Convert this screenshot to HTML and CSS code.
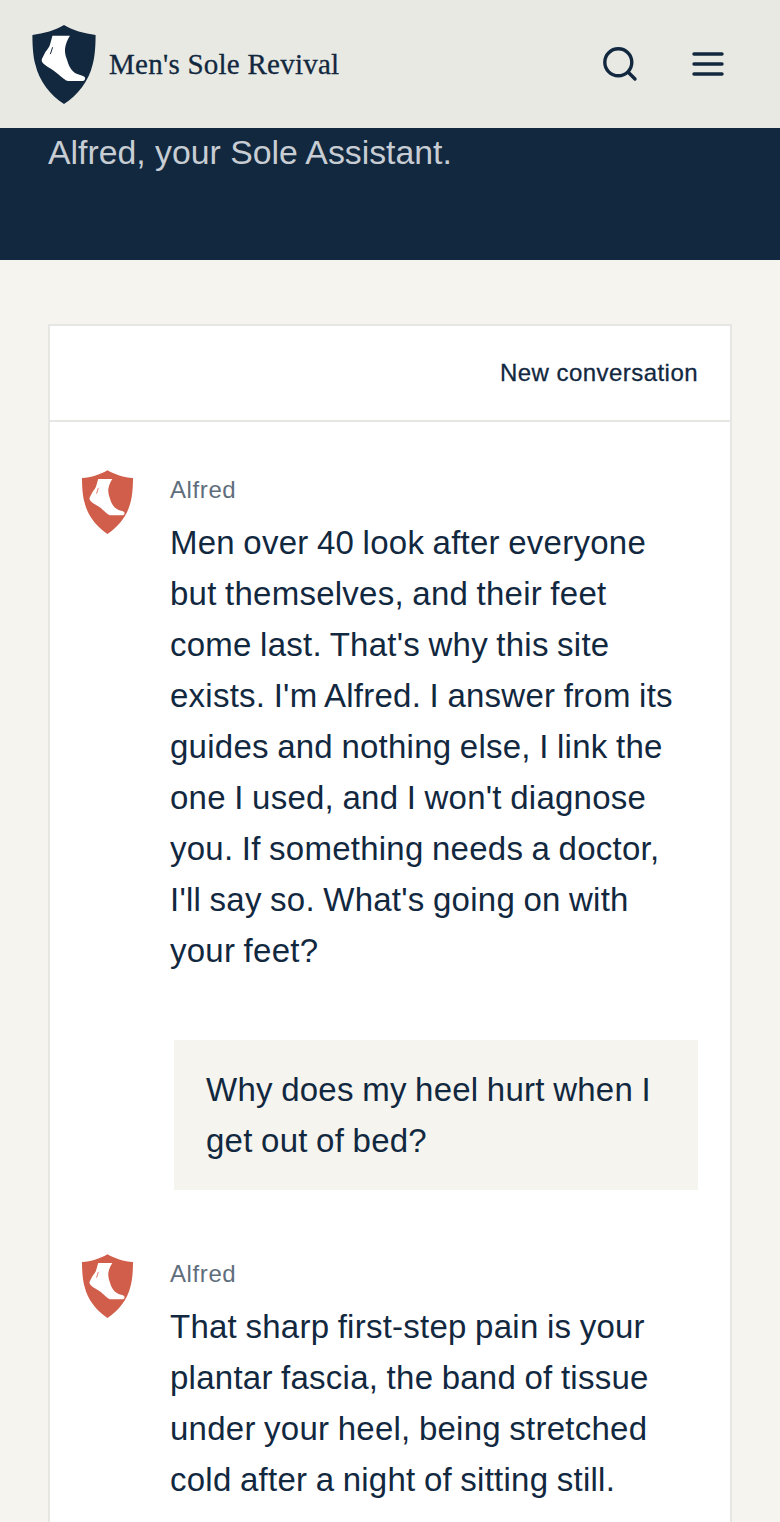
FILE: index.html
```html
<!DOCTYPE html>
<html lang="en">
<head>
    <meta charset="UTF-8">
    <meta name="viewport" content="width=device-width, initial-scale=1.0">
    <title>Alfred, your Sole Assistant</title>
    <link rel="stylesheet" href="styles.css">
</head>
<body>

    <svg class="defs" width="0" height="0">
        <symbol id="shield" viewBox="0 0 64 80">
            <path class="shield-bg" d="M32 0C24 5 11 9 0 10C0 22 1 33 3 40C7 57 18 71 32 80C46 71 57 57 61 40C63 33 64 22 64 10C53 9 40 5 32 0Z"/>
            <path fill="#fff" d="M20.3 11H38C35.5 15 33.5 19.5 33 24.3C32.8 28 33.5 31 34.7 34.3C35.8 37.5 36.5 40.5 38 42.7C40 46 42 48 44.7 49.3C47.5 50.5 51 51 53 52.7C53.8 54.5 53 56.7 51.3 56.7H36.3C34.5 56.7 33 55.5 31.3 54.3C28 51.5 25 48.5 21.3 46C18 43.8 14 42 11.3 39.3C9.5 37.5 9 36 9.7 34.3C10.8 32 12 29.8 13 27.7C15 24.8 17.3 22.5 18 19.3Z"/>
            <path class="shield-vein" d="M20.5 22.5L18.2 29.5" fill="none" stroke-width="1"/>
        </symbol>
    </svg>

    <header class="header">
        <a class="brand" href="#">
            <svg class="brand-logo" width="64" height="79"><use href="#shield"/></svg>
            <span class="brand-name">Men's Sole Revival</span>
        </a>
        <div class="header-icons">
            <button class="icon-btn" aria-label="Search">
                <svg width="40" height="40" viewBox="0 0 40 40" fill="none" stroke="#12283f" stroke-width="3.4" stroke-linecap="round">
                    <circle cx="18.3" cy="18.3" r="13.5"/>
                    <line x1="28.5" y1="28.5" x2="35" y2="35"/>
                </svg>
            </button>
            <button class="icon-btn" aria-label="Menu">
                <svg width="32" height="24" viewBox="0 0 32 24" fill="none" stroke="#12283f" stroke-width="3.4" stroke-linecap="round">
                    <line x1="2" y1="2" x2="30" y2="2"/>
                    <line x1="2" y1="12" x2="30" y2="12"/>
                    <line x1="2" y1="22" x2="30" y2="22"/>
                </svg>
            </button>
        </div>
    </header>

    <section class="hero">
        <p>Alfred, your Sole Assistant.</p>
    </section>

    <main class="main">
        <div class="chat-card">
            <div class="chat-head">
                <button class="new-chat">New conversation</button>
            </div>
            <div class="chat-body">
                <div class="msg">
                    <svg class="avatar" width="51" height="64"><use href="#shield"/></svg>
                    <div class="msg-content">
                        <div class="msg-name">Alfred</div>
                        <p>Men over 40 look after everyone but themselves, and their feet come last. That's why this site exists. I'm Alfred. I answer from its guides and nothing else, I link the one I used, and I won't diagnose you. If something needs a doctor, I'll say so. What's going on with your feet?</p>
                    </div>
                </div>
                <div class="bubble">Why does my heel hurt when I get out of bed?</div>
                <div class="msg">
                    <svg class="avatar" width="51" height="64"><use href="#shield"/></svg>
                    <div class="msg-content">
                        <div class="msg-name">Alfred</div>
                        <p>That sharp first-step pain is your plantar fascia, the band of tissue under your heel, being stretched cold after a night of sitting still.</p>
                    </div>
                </div>
            </div>
        </div>
    </main>

</body>
</html>
```

FILE: styles.css
```css
:root {
    --navy: #12283f;
    --coral: #d15e4a;
    --paper: #f5f4ef;
    --line: #e6e6e2;
    --shield-color: var(--coral);
}

html, body {
    height: 1522px;
    overflow: hidden;
}

body {
    margin: 0;
    background-color: var(--paper);
    color: var(--navy);
    font-family: "Liberation Sans", Arial, sans-serif;
}

.defs {
    position: absolute;
}

.shield-bg {
    fill: var(--shield-color);
}

.shield-vein {
    stroke: var(--shield-color);
}

.brand-logo {
    --shield-color: var(--navy);
}

.header {
    height: 128px;
    padding: 0 56px 0 32px;
    background-color: #e8e9e3;
    display: flex;
    align-items: center;
    justify-content: space-between;
}

.brand {
    display: flex;
    align-items: center;
    gap: 13px;
    color: var(--navy);
    text-decoration: none;
}

.brand-name {
    font-family: "Liberation Serif", serif;
    font-size: 29px;
    letter-spacing: 0.25px;
    -webkit-text-stroke: 0.3px;
}

.header-icons {
    display: flex;
    align-items: center;
    gap: 52px;
}

.icon-btn {
    display: flex;
    padding: 0;
    border: none;
    background: none;
}

.hero {
    height: 132px;
    background-color: var(--navy);
}

.hero p {
    margin: 0;
    padding-left: 48px;
    font-size: 33.8px;
    line-height: 48px;
    color: #c7cdd3;
}

.main {
    padding: 64px 48px;
}

.chat-card {
    background-color: #fff;
    border: 2px solid var(--line);
}

.chat-head {
    height: 94px;
    padding: 0 32px;
    border-bottom: 2px solid var(--line);
    display: flex;
    align-items: center;
    justify-content: flex-end;
}

.new-chat {
    padding: 0;
    border: none;
    background: none;
    color: var(--navy);
    font-family: inherit;
    font-size: 24px;
    letter-spacing: 0.45px;
    -webkit-text-stroke: 0.3px;
}

.chat-body {
    padding: 48px 32px;
}

.msg {
    display: flex;
    gap: 37px;
}

.avatar {
    flex-shrink: 0;
}

.msg-name {
    margin-bottom: 7px;
    font-size: 24px;
    line-height: 40px;
    letter-spacing: 0.6px;
    color: #5f6e7c;
}

.msg-content p {
    margin: 0;
    max-width: 515px;
    font-size: 33px;
    line-height: 51px;
    letter-spacing: 0.25px;
    word-spacing: -1px;
}

.bubble {
    margin: 64px 0 64px 92px;
    padding: 24px 32px;
    background-color: var(--paper);
    font-size: 33px;
    line-height: 51px;
    letter-spacing: 0.25px;
    word-spacing: -1px;
}
```
